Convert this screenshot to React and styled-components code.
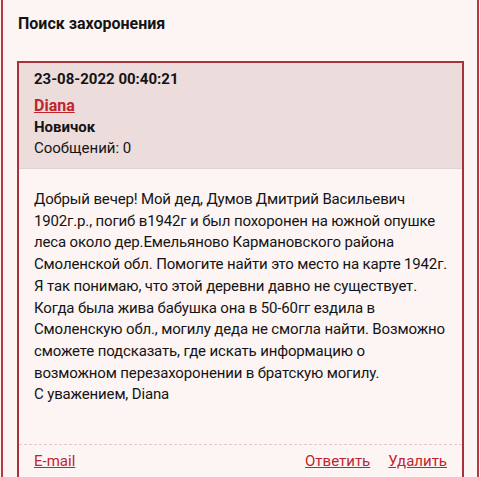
import React from 'react';
import styled, { createGlobalStyle } from 'styled-components';

const GlobalStyle = createGlobalStyle`
  html, body {
    margin: 0;
    padding: 0;
    background: #fdf5f4;
  }
  body {
    font-family: Roboto, "Noto Sans", Arial, sans-serif;
    color: #141414;
  }
`;

const Page = styled.div`
  padding: 0 1px;
  height: 477px;
  overflow: hidden;
`;

const Frame = styled.div`
  border-left: 2px solid #b33a3f;
  border-right: 2px solid #b33a3f;
  background: #fdf5f4;
  padding: 0 13px 0 14px;
  min-height: 477px;
`;

const Title = styled.h1`
  margin: 0;
  padding: 13px 0 0 1px;
  height: 61px;
  box-sizing: border-box;
  font-size: 16px;
  line-height: 22px;
  font-weight: 700;
`;

const Card = styled.div`
  border: 2px solid #a8323a;
  background: #fdf5f4;
`;

const CardHeader = styled.div`
  background: #ecdcdc;
  padding: 6px 15px 9px;
  border-bottom: 1px solid #e2d2d2;
`;

const Date = styled.div`
  font-weight: 700;
  font-size: 15px;
  line-height: 20px;
  margin-bottom: 6px;
`;

const Line = styled.div`
  font-size: 15px;
  line-height: 21px;
  font-weight: ${(p) => (p.$bold ? 700 : 400)};
`;

const Link = styled.a`
  color: #c0242c;
  text-decoration: underline;
  font-size: ${(p) => (p.$bold ? 16 : 15)}px;
  font-weight: ${(p) => (p.$bold ? 700 : 400)};
  cursor: pointer;
`;

const Body = styled.div`
  padding: 20px 10px 38px 15px;
  font-size: 15px;
  letter-spacing: -0.15px;
  line-height: 21.7px;
  white-space: nowrap;
`;

const Footer = styled.div`
  border-top: 1px dashed #e3c9c9;
  padding: 6px 15px 8px;
  display: flex;
  align-items: center;
  line-height: 20px;
`;

const Actions = styled.div`
  margin-left: auto;
  display: flex;
  gap: 18px;
`;

export default function App() {
  return (
    <>
      <GlobalStyle />
      <Page>
        <Frame>
          <Title>Поиск захоронения</Title>
          <Card>
            <CardHeader>
              <Date>23-08-2022 00:40:21</Date>
              <Line>
                <Link $bold>Diana</Link>
              </Line>
              <Line $bold>Новичок</Line>
              <Line>Сообщений: 0</Line>
            </CardHeader>
            <Body>
              Добрый вечер! Мой дед, Думов Дмитрий Васильевич
              <br />
              1902г.р., погиб в1942г и был похоронен на южной опушке
              <br />
              леса около дер.Емельяново Кармановского района
              <br />
              Смоленской обл. Помогите найти это место на карте 1942г.
              <br />
              Я так понимаю, что этой деревни давно не существует.
              <br />
              Когда была жива бабушка она в 50-60гг ездила в
              <br />
              Смоленскую обл., могилу деда не смогла найти. Возможно
              <br />
              сможете подсказать, где искать информацию о
              <br />
              возможном перезахоронении в братскую могилу.
              <br />
              С уважением, Diana
            </Body>
            <Footer>
              <Link>E-mail</Link>
              <Actions>
                <Link>Ответить</Link>
                <Link>Удалить</Link>
              </Actions>
            </Footer>
          </Card>
        </Frame>
      </Page>
    </>
  );
}
